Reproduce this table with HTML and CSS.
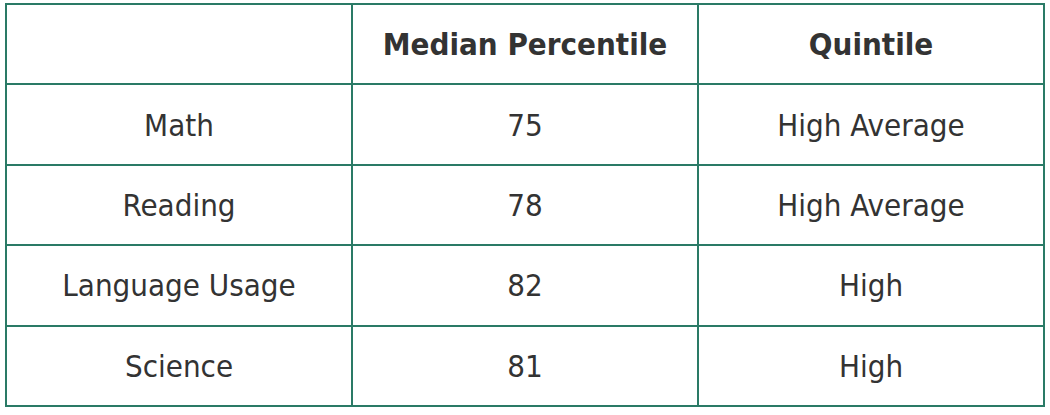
FILE: index.html
```html
<!DOCTYPE html>
<html>
<head>
<meta charset="utf-8">
<link rel="stylesheet" href="styles.css">
</head>
<body>
<table class="scores">
  <thead>
    <tr><th></th><th>Median Percentile</th><th>Quintile</th></tr>
  </thead>
  <tbody>
    <tr><td>Math</td><td>75</td><td>High Average</td></tr>
    <tr><td>Reading</td><td>78</td><td>High Average</td></tr>
    <tr><td>Language Usage</td><td>82</td><td>High</td></tr>
    <tr><td>Science</td><td>81</td><td>High</td></tr>
  </tbody>
</table>
</body>
</html>
```
FILE: styles.css
```css
html, body { margin: 0; background: #fff; }
body { padding: 3px 0 0 5px; }
.scores {
  border-collapse: collapse;
  width: 1040px;
  table-layout: fixed;
  font-family: "DejaVu Sans Condensed", "DejaVu Sans", sans-serif;
  font-size: 31px;
  color: #333;
}
.scores th, .scores td {
  border: 2px solid #2a7a66;
  text-align: center;
  vertical-align: middle;
  height: 78.4px;
  padding: 0;
}
.scores th { font-weight: bold; }
.scores td { font-weight: normal; }
```
